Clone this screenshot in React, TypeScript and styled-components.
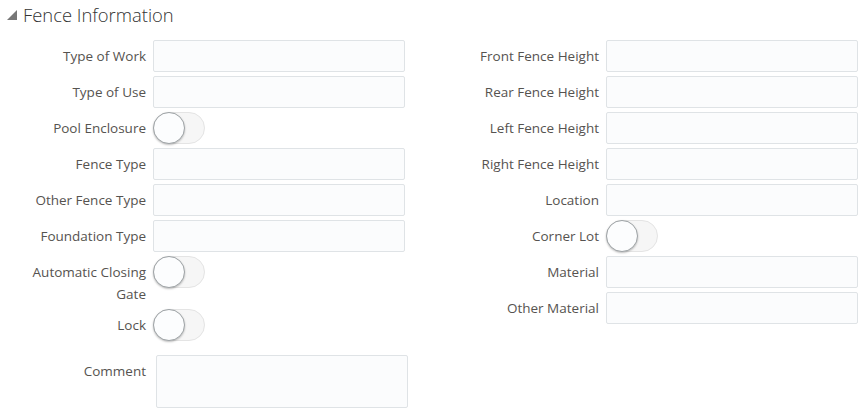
import React from "react";
import styled, { createGlobalStyle } from "styled-components";

const GlobalStyle = createGlobalStyle`
  body {
    margin: 0;
    background: #ffffff;
    font-family: "Open Sans", "Noto Sans", sans-serif;
  }
`;

type Field = { label: string; kind: "text" | "toggle" | "area" };

const leftFields: Field[] = [
  { label: "Type of Work", kind: "text" },
  { label: "Type of Use", kind: "text" },
  { label: "Pool Enclosure", kind: "toggle" },
  { label: "Fence Type", kind: "text" },
  { label: "Other Fence Type", kind: "text" },
  { label: "Foundation Type", kind: "text" },
  { label: "Automatic Closing Gate", kind: "toggle" },
  { label: "Lock", kind: "toggle" },
  { label: "Comment", kind: "area" },
];

const rightFields: Field[] = [
  { label: "Front Fence Height", kind: "text" },
  { label: "Rear Fence Height", kind: "text" },
  { label: "Left Fence Height", kind: "text" },
  { label: "Right Fence Height", kind: "text" },
  { label: "Location", kind: "text" },
  { label: "Corner Lot", kind: "toggle" },
  { label: "Material", kind: "text" },
  { label: "Other Material", kind: "text" },
];

const App = () => {
  const renderField = (f: Field) => (
    <Row key={f.label} $tall={f.kind === "area"}>
      <Label>{f.label}</Label>
      {f.kind === "text" && <TextInput />}
      {f.kind === "toggle" && (
        <Toggle>
          <Knob />
        </Toggle>
      )}
      {f.kind === "area" && <TextArea />}
    </Row>
  );

  return (
    <Page>
      <GlobalStyle />
      <Header>
        <Caret viewBox="0 0 10 10">
          <polygon points="0,10 10,10 10,0" fill="#777" />
        </Caret>
        <Title>Fence Information</Title>
      </Header>
      <Columns>
        <Column>{leftFields.map(renderField)}</Column>
        <Column>{rightFields.map(renderField)}</Column>
      </Columns>
    </Page>
  );
};

const Page = styled.div`
  width: 865px;
  height: 417px;
  overflow: hidden;
`;

const Header = styled.div`
  display: flex;
  align-items: center;
  gap: 6px;
  height: 28px;
  padding-left: 7px;
`;

const Caret = styled.svg`
  width: 10px;
  height: 10px;
  margin-top: 1px;
`;

const Title = styled.h2`
  margin: 0;
  font-size: 18.4px;
  font-weight: 300;
  color: #333333;
`;

const Columns = styled.div`
  display: flex;
  gap: 48px;
  padding-top: 12px;
`;

const Column = styled.div`
  display: flex;
  flex-direction: column;
  gap: 4px;
  width: 405px;
`;

const Row = styled.div<{ $tall?: boolean }>`
  display: flex;
  align-items: flex-start;
  gap: 7px;
  margin-top: ${(p) => (p.$tall ? "10px" : "0")};
`;

const Label = styled.label`
  width: 122px;
  margin-left: 24px;
  flex-shrink: 0;
  padding-top: 5px;
  text-align: right;
  font-size: 13.5px;
  line-height: 22px;
  color: #565350;
`;

const TextInput = styled.div`
  box-sizing: border-box;
  flex-shrink: 0;
  width: 252px;
  height: 32px;
  background: #fbfcfd;
  border: 1px solid #dfe3e6;
  border-radius: 2px;
`;

const TextArea = styled(TextInput)`
  height: 53px;
  margin-left: 3px;
`;

const Toggle = styled.div`
  position: relative;
  box-sizing: border-box;
  flex-shrink: 0;
  width: 52px;
  height: 32px;
  background: #f6f6f6;
  border: 1px solid #e4e4e4;
  border-radius: 16px;
`;

const Knob = styled.div`
  position: absolute;
  left: -1px;
  top: -1px;
  box-sizing: border-box;
  width: 32px;
  height: 32px;
  border-radius: 50%;
  background: #fcfdfe;
  border: 1px solid #9ea3a6;
  box-shadow: 0 1px 2px rgba(0, 0, 0, 0.25);
`;

export default App;
